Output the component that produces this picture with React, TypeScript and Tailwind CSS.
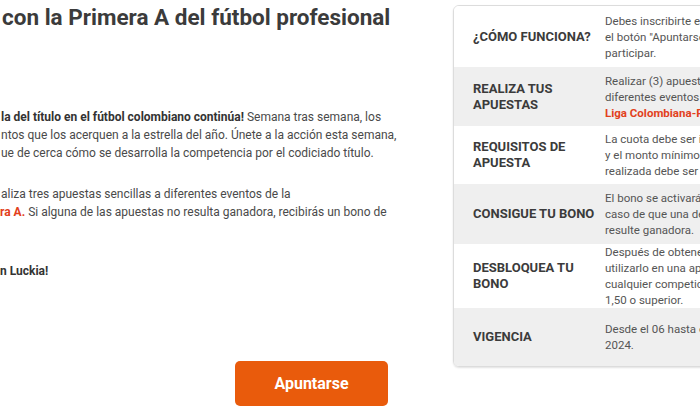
import React from 'react';

interface Row {
  title: string;
  lines: React.ReactNode[];
  height: string;
  shaded: boolean;
}

const rows: Row[] = [
  {
    title: '¿CÓMO FUNCIONA?',
    lines: ['Debes inscribirte en esta promoción pulsando', 'el botón "Apuntarse" que verás abajo para', 'participar.'],
    height: 'h-[61px]',
    shaded: false,
  },
  {
    title: 'REALIZA TUS APUESTAS',
    lines: [
      'Realizar (3) apuestas sencillas a',
      'diferentes eventos de la',
      <span className="font-bold text-[#e2401c]">Liga Colombiana-Primera A.</span>,
    ],
    height: 'h-[59px]',
    shaded: true,
  },
  {
    title: 'REQUISITOS DE APUESTA',
    lines: ['La cuota debe ser igual o superior a 1,50', 'y el monto mínimo de cada apuesta', 'realizada debe ser de $5.000.'],
    height: 'h-[58px]',
    shaded: false,
  },
  {
    title: 'CONSIGUE TU BONO',
    lines: ['El bono se activará en', 'caso de que una de las apuestas no', 'resulte ganadora.'],
    height: 'h-[60px]',
    shaded: true,
  },
  {
    title: 'DESBLOQUEA TU BONO',
    lines: ['Después de obtener el bono, podrás', 'utilizarlo en una apuesta sencilla de', 'cualquier competición con cuota', '1,50 o superior.'],
    height: 'h-[64px]',
    shaded: false,
  },
  {
    title: 'VIGENCIA',
    lines: ['Desde el 06 hasta el 31 de marzo de', '2024.'],
    height: 'h-[58px]',
    shaded: true,
  },
];

const App: React.FC = () => {
  return (
    <div className="w-[700px] h-[420px] overflow-hidden bg-white font-['Roboto',sans-serif] flex">
      {/* Left column, cut off at the viewport edge */}
      <div className="w-[388px] shrink-0 flex flex-col">
        <h1 className="mt-[3px] ml-[2px] whitespace-nowrap text-[22.5px] leading-[28px] font-bold text-[#3b3b3b]">
          con la Primera A del fútbol profesional
        </h1>

        <div className="mt-[77px] text-[12px] leading-[18px] text-[#4a4a4a] whitespace-nowrap">
          <p className="mb-[23px]">
            <span className="ml-[1px] font-bold text-[#333]">la del título en el fútbol colombiano continúa!</span> Semana tras semana, los
            <br />
            <span className="ml-[1px]">ntos que los acerquen a la estrella del año. Únete a la acción esta semana,</span>
            <br />
            <span className="ml-[1px]">ue de cerca cómo se desarrolla la competencia por el codiciado título.</span>
          </p>
          <p className="mb-[23px]">
            <span className="ml-[1px]">aliza tres apuestas sencillas a diferentes eventos de la</span>
            <br />
            <span className="font-bold text-[#e2401c]">ra A.</span> Si alguna de las apuestas no resulta ganadora, recibirás un bono de
            <br />
            <span>&nbsp;</span>
          </p>
          <p className="font-bold text-[#333]">n Luckia!</p>
        </div>

        <div className="mt-auto mb-[14px] flex justify-end">
          <button className="w-[153px] h-[45px] rounded-[5px] bg-[#e95b0c] text-white text-[16px] font-bold">
            Apuntarse
          </button>
        </div>
      </div>

      {/* Right info panel */}
      <div className="ml-[65px] mt-[5px] self-start w-[420px] shrink-0 rounded-[6px] border border-[#dcdcdc] shadow-[0_1px_2px_rgba(0,0,0,0.12)] overflow-hidden">
        {rows.map((row) => (
          <div
            key={row.title}
            className={`flex items-center ${row.height} ${row.shaded ? 'bg-[#efefef]' : 'bg-white'}`}
          >
            <div className="w-[151px] shrink-0 pl-[19px] pr-[10px] text-[13px] leading-[16px] font-bold text-[#3b3b3b]">
              {row.title}
            </div>
            <div className="text-[11.5px] leading-[16px] text-[#555] whitespace-nowrap">
              {row.lines.map((line, i) => (
                <div key={i}>{line}</div>
              ))}
            </div>
          </div>
        ))}
      </div>
    </div>
  );
};

export default App;
